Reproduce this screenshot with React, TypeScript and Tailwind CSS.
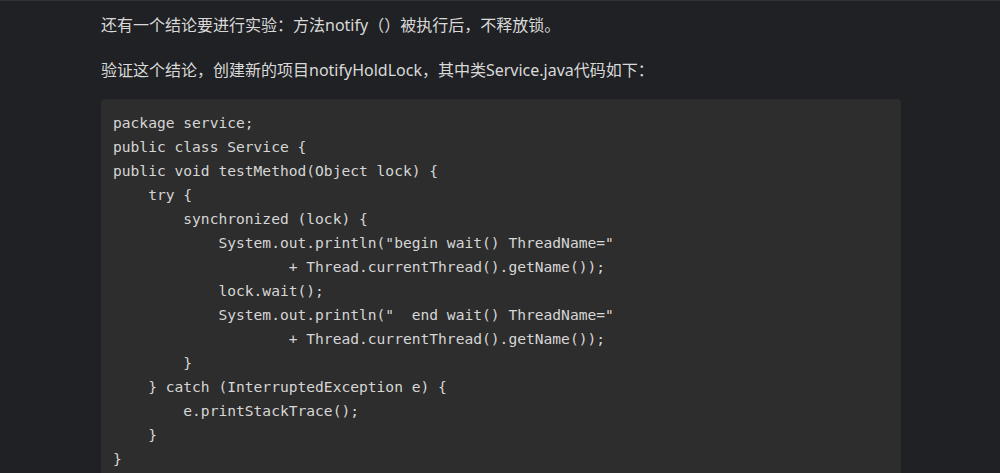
const code = `package service;
public class Service {
public void testMethod(Object lock) {
    try {
        synchronized (lock) {
            System.out.println("begin wait() ThreadName="
                    + Thread.currentThread().getName());
            lock.wait();
            System.out.println("  end wait() ThreadName="
                    + Thread.currentThread().getName());
        }
    } catch (InterruptedException e) {
        e.printStackTrace();
    }
}`;

export default function App() {
  return (
    <div className="h-[473px] overflow-hidden bg-[#202124] border-t border-[#303133]">
      <div className="ml-[101px] w-[800px] pt-[12px] font-['Noto_Sans','Noto_Sans_CJK_SC',sans-serif] text-[16px] leading-[24px] text-[#d9d9d9]">
        <p className="mb-[21px]">还有一个结论要进行实验：方法notify（）被执行后，不释放锁。</p>
        <p className="mb-[17px]">验证这个结论，创建新的项目notifyHoldLock，其中类Service.java代码如下：</p>
        <pre className="rounded-[4px] bg-[#2d2d2d] px-[12px] py-[12px] font-['DejaVu_Sans_Mono',monospace] text-[14.6px] leading-[24px] text-[#d6d6d6]">
          {code}
        </pre>
      </div>
    </div>
  );
}
